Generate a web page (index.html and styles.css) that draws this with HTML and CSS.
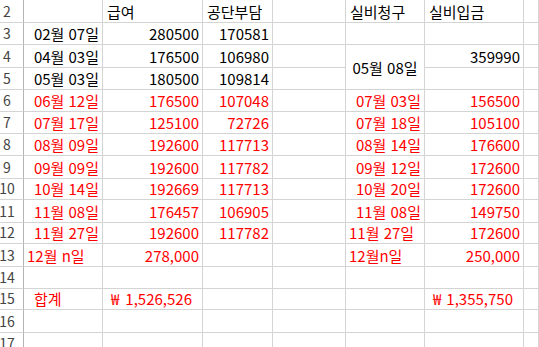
FILE: index.html
```html
<!DOCTYPE html>
<html lang="ko">
<head>
<meta charset="utf-8">
<link rel="stylesheet" href="styles.css">
</head>
<body>
<div class="sheet">
  <div class="rh">2</div><div class="c"></div><div class="c hd">급여</div><div class="c hd">공단부담</div><div class="c"></div><div class="c hd">실비청구</div><div class="c hd">실비입금</div><div class="c"></div>

  <div class="rh">3</div><div class="c r">02월 07일</div><div class="c r">280500</div><div class="c r">170581</div><div class="c"></div><div class="c"></div><div class="c"></div><div class="c"></div>

  <div class="rh">4</div><div class="c r">04월 03일</div><div class="c r">176500</div><div class="c r">106980</div><div class="c"></div><div class="c mid">05월 08일</div><div class="c r">359990</div><div class="c"></div>

  <div class="rh">5</div><div class="c r">05월 03일</div><div class="c r">180500</div><div class="c r">109814</div><div class="c"></div><div class="c"></div><div class="c"></div>

  <div class="rh">6</div><div class="c r red">06월 12일</div><div class="c r red">176500</div><div class="c r red">107048</div><div class="c"></div><div class="c r red">07월 03일</div><div class="c r red">156500</div><div class="c"></div>

  <div class="rh">7</div><div class="c r red">07월 17일</div><div class="c r red">125100</div><div class="c r red">72726</div><div class="c"></div><div class="c r red">07월 18일</div><div class="c r red">105100</div><div class="c"></div>

  <div class="rh">8</div><div class="c r red">08월 09일</div><div class="c r red">192600</div><div class="c r red">117713</div><div class="c"></div><div class="c r red">08월 14일</div><div class="c r red">176600</div><div class="c"></div>

  <div class="rh">9</div><div class="c r red">09월 09일</div><div class="c r red">192600</div><div class="c r red">117782</div><div class="c"></div><div class="c r red">09월 12일</div><div class="c r red">172600</div><div class="c"></div>

  <div class="rh">10</div><div class="c r red">10월 14일</div><div class="c r red">192669</div><div class="c r red">117713</div><div class="c"></div><div class="c r red">10월 20일</div><div class="c r red">172600</div><div class="c"></div>

  <div class="rh">11</div><div class="c r red">11월 08일</div><div class="c r red">176457</div><div class="c r red">106905</div><div class="c"></div><div class="c r red">11월 08일</div><div class="c r red">149750</div><div class="c"></div>

  <div class="rh">12</div><div class="c r red">11월 27일</div><div class="c r red">192600</div><div class="c r red">117782</div><div class="c"></div><div class="c red">11월 27일</div><div class="c r red">172600</div><div class="c"></div>

  <div class="rh">13</div><div class="c red">12월 n일</div><div class="c r red">278,000</div><div class="c"></div><div class="c"></div><div class="c red">12월n일</div><div class="c r red">250,000</div><div class="c"></div>

  <div class="rh">14</div><div class="c"></div><div class="c"></div><div class="c"></div><div class="c"></div><div class="c"></div><div class="c"></div><div class="c"></div>

  <div class="rh">15</div><div class="c red ind">합계</div><div class="c acc red"><span>₩</span><span>1,526,526</span></div><div class="c"></div><div class="c"></div><div class="c"></div><div class="c acc red"><span>₩</span><span>1,355,750</span></div><div class="c"></div>

  <div class="rh">16</div><div class="c"></div><div class="c"></div><div class="c"></div><div class="c"></div><div class="c"></div><div class="c"></div><div class="c"></div>

  <div class="rh">17</div><div class="c"></div><div class="c"></div><div class="c"></div><div class="c"></div><div class="c"></div><div class="c"></div><div class="c"></div>
</div>
</body>
</html>
```

FILE: styles.css
```css
html, body {
  margin: 0;
  padding: 0;
  background: #ffffff;
}

.sheet {
  width: 539px;
  height: 347px;
  overflow: hidden;
  display: grid;
  grid-template-columns: 24px 79px 100px 70px 73px 79px 99px 1fr;
  grid-template-rows: 23px 22px 23px 22px 22px 22px 22px 23px 21px 23px 21px 23px 22px 21px 23px 22px;
  font-family: "Noto Sans CJK KR", "Noto Sans", sans-serif;
  font-size: 15px;
  color: #000000;
}

.c, .rh {
  box-sizing: border-box;
  border-right: 1px solid #d4d4d4;
  border-bottom: 1px solid #d4d4d4;
  display: flex;
  align-items: flex-end;
  padding: 0 3px 2px 3px;
  line-height: 17px;
  white-space: nowrap;
  overflow: hidden;
}

.rh {
  border-right-color: #b4b4b4;
  justify-content: center;
  padding: 0 9px 2px 0;
  font-size: 14px;
  color: #444444;
}

.hd {
  padding-left: 4px;
}

.r {
  justify-content: flex-end;
}

.red {
  color: #ff0000;
}

.mid {
  grid-row: span 2;
  align-items: center;
  justify-content: center;
  padding: 1px 0 0 0;
}

.ind {
  padding-left: 10px;
}

.acc {
  justify-content: space-between;
  padding: 0 10px 2px 8px;
}
```
